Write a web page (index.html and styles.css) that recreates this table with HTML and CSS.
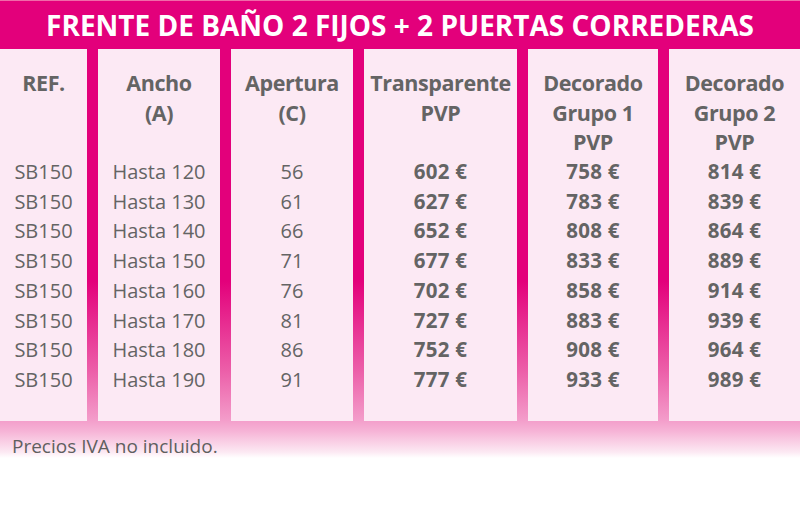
FILE: index.html
```html
<!DOCTYPE html>
<html lang="es">
<head>
<meta charset="utf-8">
<title>Frente de baño 2 fijos + 2 puertas correderas</title>
<link rel="stylesheet" href="styles.css">
</head>
<body>
<div class="sheet">
  <h1 class="title">FRENTE DE BAÑO 2 FIJOS + 2 PUERTAS CORREDERAS</h1>
  <div class="cols">
    <div class="col">
      <div class="head">REF.</div>
      <div class="v">SB150</div><div class="v">SB150</div><div class="v">SB150</div><div class="v">SB150</div>
      <div class="v">SB150</div><div class="v">SB150</div><div class="v">SB150</div><div class="v">SB150</div>
    </div>
    <div class="col">
      <div class="head">Ancho<br>(A)</div>
      <div class="v">Hasta 120</div><div class="v">Hasta 130</div><div class="v">Hasta 140</div><div class="v">Hasta 150</div>
      <div class="v">Hasta 160</div><div class="v">Hasta 170</div><div class="v">Hasta 180</div><div class="v">Hasta 190</div>
    </div>
    <div class="col">
      <div class="head">Apertura<br>(C)</div>
      <div class="v">56</div><div class="v">61</div><div class="v">66</div><div class="v">71</div>
      <div class="v">76</div><div class="v">81</div><div class="v">86</div><div class="v">91</div>
    </div>
    <div class="col price">
      <div class="head">Transparente<br>PVP</div>
      <div class="v">602 €</div><div class="v">627 €</div><div class="v">652 €</div><div class="v">677 €</div>
      <div class="v">702 €</div><div class="v">727 €</div><div class="v">752 €</div><div class="v">777 €</div>
    </div>
    <div class="col price">
      <div class="head">Decorado<br>Grupo 1<br>PVP</div>
      <div class="v">758 €</div><div class="v">783 €</div><div class="v">808 €</div><div class="v">833 €</div>
      <div class="v">858 €</div><div class="v">883 €</div><div class="v">908 €</div><div class="v">933 €</div>
    </div>
    <div class="col price">
      <div class="head">Decorado<br>Grupo 2<br>PVP</div>
      <div class="v">814 €</div><div class="v">839 €</div><div class="v">864 €</div><div class="v">889 €</div>
      <div class="v">914 €</div><div class="v">939 €</div><div class="v">964 €</div><div class="v">989 €</div>
    </div>
  </div>
  <p class="note">Precios IVA no incluido.</p>
</div>
</body>
</html>
```

FILE: styles.css
```css
html, body {
  margin: 0;
  padding: 0;
  background: #ffffff;
}
body {
  font-family: "Open Sans", "Liberation Sans", sans-serif;
  color: #646464;
}
.sheet {
  height: 457px;
  border-top: 1px solid #f06aa9;
  background: linear-gradient(180deg, #e3007b 0, #e3007b 280px, #ec5fa9 370px, #f39bc9 418px, #f6b3d6 430px, #fce9f3 451px, #ffffff 457px);
}
.title {
  margin: 0;
  height: 48px;
  line-height: 48px;
  text-align: center;
  color: #ffffff;
  font-size: 28px;
  font-weight: 700;
  white-space: nowrap;
}
.cols {
  display: grid;
  grid-template-columns: 87px 122px 122px 153px 130px 131px;
  column-gap: 11px;
}
.col {
  background: #fce9f4;
  height: 372px;
  box-sizing: border-box;
  padding-top: 19px;
  text-align: center;
  line-height: 29.7px;
}
.head {
  height: 89px;
  font-size: 21.5px;
  font-weight: 700;
  letter-spacing: -0.4px;
}
.v {
  font-size: 20px;
  font-weight: 400;
}
.price .v {
  font-weight: 700;
  font-size: 20.5px;
  letter-spacing: 0.3px;
}
.note {
  margin: 0;
  padding: 13px 0 0 12px;
  font-size: 19px;
  line-height: 24px;
  color: #5f5f5f;
}
```
